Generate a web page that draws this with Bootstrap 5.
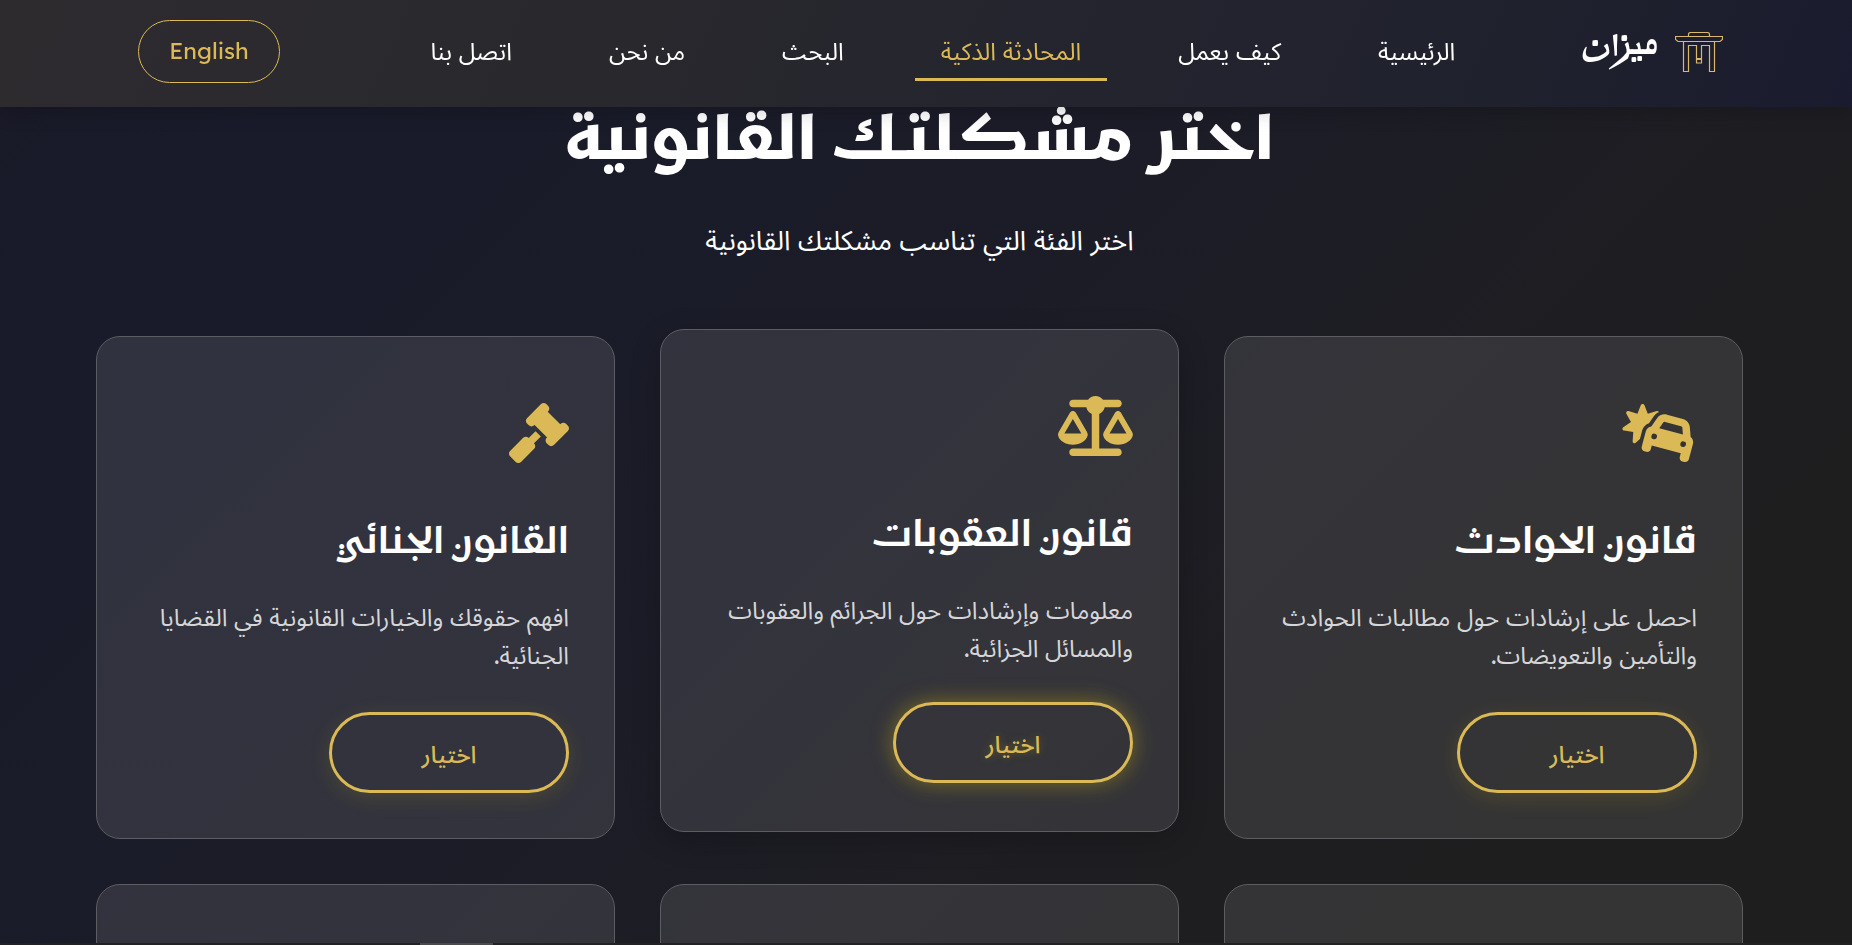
<!DOCTYPE html>
<html lang="ar" dir="rtl">
<head>
<meta charset="utf-8">
<meta name="viewport" content="width=device-width, initial-scale=1">
<title>ميزان</title>
<link href="https://cdn.jsdelivr.net/npm/bootstrap@5.3.0/dist/css/bootstrap.min.css" rel="stylesheet">
<style>
  :root { --gold: #dbb956; }
  body {
    font-family: Lexend, "Noto Sans Arabic", "DejaVu Sans", sans-serif;
    color: #fff;
    background: linear-gradient(135deg, #1a1a27 0%, #191b2b 15%, #1b1c27 45%, #1e1e22 68%, #1e1e1e 88%);
  }
  .site-nav {
    height: 107px;
    padding: 0 129px 4px 138px;
    background: linear-gradient(115deg, #2e2b2f 0%, #29292d 30%, #23242e 60%, #1f212d 82%, #1a1b2e 100%);
    box-shadow: 0 4px 20px rgba(0, 0, 0, .2);
  }
  .brand-name { font-family: Ruwudu, "Scheherazade New", "DejaVu Sans", serif; font-size: 34px; line-height: 60px; font-weight: 700; color: #fff; }
  .menu { gap: 45px; margin-left: 24px; font-size: 24px; }
  .menu a { color: #fff; padding: 0 26px; height: 59px; line-height: 58px; border-bottom: 3px solid transparent; text-decoration: none; white-space: nowrap; }
  .menu a.active { color: var(--gold); border-color: var(--gold); }
  .lang { width: 142px; height: 63px; border: 1px solid var(--gold); color: var(--gold); font-size: 23px; }
  .lang:hover { border-color: var(--gold); color: var(--gold); }
  .picker { padding: 0 109px 0 96px; }
  .picker h1, .topic h2 { font-family: Kufam, "DejaVu Sans", sans-serif; }
  .picker h1 { font-size: 60px; font-weight: 700; line-height: 90px; padding-top: 99px; }
  .picker .intro { font-size: 27px; line-height: 40px; margin: 31px 0 76px; }
  .topics { display: grid; grid-template-columns: repeat(3, 1fr); gap: 45px; }
  .topic { min-height: 503px; padding: 66px 45px 0; border: 1px solid #5c5c62; border-radius: 24px; background: rgba(255, 255, 255, .1); }
  .topic.raised { transform: translateY(-7px); box-shadow: 0 8px 30px rgba(0, 0, 0, .2); }
  .topic svg { height: 60px; fill: var(--gold); }
  .topic h2 { font-size: 36px; font-weight: 600; line-height: 60px; margin: 51px 0 24px; }
  .topic p { font-size: 24px; line-height: 38px; color: #d6d6d8; margin-bottom: 38px; }
  .choose, .choose:hover { width: 240px; height: 81px; padding-top: 8px; border: 3px solid var(--gold); color: var(--gold); font-size: 24px; font-weight: 500; box-shadow: 0 5px 22px rgba(255, 215, 0, .12); }
  .raised .choose { transform: translateY(-3px); box-shadow: 0 0 22px rgba(255, 215, 0, .35); text-shadow: 0 0 10px rgba(255, 215, 0, .3); }
  .bottom-edge { height: 2px; background: #222; padding-left: 420px; }
  .bottom-edge div { width: 73px; height: 2px; background: #4a4a4a; }
</style>
</head>
<body class="vh-100 overflow-hidden">
<header class="site-nav fixed-top d-flex align-items-center justify-content-between">
  <a href="#" class="d-flex align-items-center gap-3 text-decoration-none">
    <svg width="48" height="40" viewBox="0 0 48 40" fill="none" stroke="#d9b869" stroke-width="1.200"><path d="M13.500 4V2.500Q13.500 .500 16 .500H32Q34.500 .500 34.500 2.500V4M.500 4.500H47.500V7.500L45 9.500H3L.500 7.500ZM8.500 9.500V39.500H13.500V13.500H21.500V26.500H26.500V13.500H34.500V39.500H39.500V9.500M21.500 27.500H26.500V31H21.500Z"/></svg>
    <span class="brand-name">ميزان</span>
  </a>
  <nav class="menu d-flex">
    <a href="#">الرئيسية</a>
    <a href="#">كيف يعمل</a>
    <a href="#" class="active">المحادثة الذكية</a>
    <a href="#">البحث</a>
    <a href="#">من نحن</a>
    <a href="#">اتصل بنا</a>
  </nav>
  <button type="button" class="lang btn rounded-pill">English</button>
</header>
<main class="picker">
  <h1 class="text-center mb-0">اختر مشكلتك القانونية</h1>
  <p class="intro text-center">اختر الفئة التي تناسب مشكلتك القانونية</p>
  <section class="topics">
    <article class="topic">
      <svg viewBox="0 0 640 512" aria-hidden="true"><path d="M176 8c-6.600 0-12.400 4-14.900 10.100l-29.400 74L55.600 68.900c-6.300-1.900-13.100 .2-17.200 5.300s-4.600 12.200-1.400 17.900l39.500 69.100L10.900 206.400c-5.400 3.700-8 10.300-6.500 16.700s6.700 11.200 13.100 12.200l78.700 12.200L90.600 327c-.5 6.500 3.100 12.700 9 15.500s12.900 1.800 17.800-2.600l35.300-32.500 9.500-35.400 10.400-38.600c8-29.900 30.500-52.100 57.900-60.900l41-59.200c11.300-16.300 26.400-28.900 43.500-37.200c-.4-.6-.8-1.200-1.300-1.800c-4.100-5.100-10.900-7.200-17.200-5.300L220.300 92.100l-29.400-74C188.400 12 182.600 8 176 8zM367.700 161.500l135.600 36.300c6.500 1.800 11.300 7.400 11.800 14.200l4.600 56.500-201.500-54 32.200-46.600c3.800-5.600 10.800-8.100 17.300-6.400zm-69.900-30l-47.900 69.300c-21.600 3-40.300 18.600-46.300 41l-10.400 38.600-16.600 61.800-8.300 30.900c-4.600 17.100 5.600 34.600 22.600 39.200l15.500 4.100c17.100 4.600 34.600-5.600 39.200-22.600l8.300-30.900 247.300 66.300-8.300 30.900c-4.600 17.100 5.600 34.600 22.600 39.200l15.500 4.100c17.100 4.600 34.600-5.600 39.200-22.600l8.300-30.900L595 388l10.400-38.600c6-22.400-2.500-45.200-19.600-58.700l-6.800-84c-2.700-33.700-26.400-62-59-70.800L384.200 99.700c-32.700-8.800-67.300 4-86.500 31.800zm-17 131a24 24 0 1 1 -12.400 46.400 24 24 0 1 1 12.400-46.400zm217.900 83.200A24 24 0 1 1 545 358.100a24 24 0 1 1 -46.400-12.400z"/></svg>
      <h2>قانون الحوادث</h2>
      <p>احصل على إرشادات حول مطالبات الحوادث والتأمين والتعويضات.</p>
      <button type="button" class="choose btn rounded-pill">اختيار</button>
    </article>
    <article class="topic raised">
      <svg viewBox="0 0 640 512" aria-hidden="true"><path d="M384 32H512c17.700 0 32 14.300 32 32s-14.300 32-32 32H398.400c-5.200 25.800-22.900 47.100-46.400 57.300V448H512c17.700 0 32 14.300 32 32s-14.300 32-32 32H128c-17.700 0-32-14.300-32-32s14.300-32 32-32H288V153.300c-23.500-10.300-41.200-31.600-46.400-57.300H128c-17.700 0-32-14.300-32-32s14.300-32 32-32H256c14.600-19.400 37.800-32 64-32s49.400 12.600 64 32zm55.600 288H584.400L512 195.800 439.600 320zM512 416c-62.900 0-115.200-34-126-78.900c-2.600-11 1-22.300 6.700-32.100l95.200-163.200c5-8.600 14.200-13.800 24.100-13.800s19.100 5.300 24.100 13.800l95.200 163.200c5.700 9.800 9.300 21.100 6.700 32.100C627.200 382 574.900 416 512 416zM126.800 195.800L54.400 320H199.300L126.800 195.800zM.9 337.100c-2.600-11 1-22.300 6.700-32.100l95.200-163.200c5-8.600 14.200-13.800 24.100-13.800s19.100 5.300 24.100 13.800l95.200 163.200c5.700 9.800 9.300 21.100 6.700 32.100C242 382 189.700 416 126.800 416S11.700 382 .9 337.100z"/></svg>
      <h2>قانون العقوبات</h2>
      <p>معلومات وإرشادات حول الجرائم والعقوبات والمسائل الجزائية.</p>
      <button type="button" class="choose btn rounded-pill">اختيار</button>
    </article>
    <article class="topic">
      <svg viewBox="0 0 512 512" aria-hidden="true"><path d="M318.600 9.400c-12.500-12.500-32.800-12.500-45.300 0l-120 120c-12.500 12.500-12.500 32.800 0 45.300l16 16c12.500 12.500 32.800 12.500 45.300 0l4-4L325.400 293.400l-4 4c-12.500 12.500-12.500 32.800 0 45.300l16 16c12.500 12.500 32.800 12.500 45.300 0l120-120c12.500-12.500 12.500-32.800 0-45.300l-16-16c-12.500-12.500-32.800-12.500-45.300 0l-4 4L330.600 74.600l4-4c12.500-12.500 12.500-32.800 0-45.300l-16-16zm-152 288c-12.500-12.500-32.800-12.500-45.300 0l-112 112c-12.500 12.500-12.500 32.800 0 45.300l48 48c12.500 12.500 32.800 12.500 45.300 0l112-112c12.500-12.500 12.500-32.800 0-45.300l-1.400-1.400L272 285.300 226.700 240 168 298.700l-1.400-1.400z"/></svg>
      <h2>القانون الجنائي</h2>
      <p>افهم حقوقك والخيارات القانونية في القضايا الجنائية.</p>
      <button type="button" class="choose btn rounded-pill">اختيار</button>
    </article>
    <article class="topic"></article>
    <article class="topic"></article>
    <article class="topic"></article>
  </section>
</main>
<div class="bottom-edge fixed-bottom" dir="ltr"><div></div></div>
<script src="https://cdn.jsdelivr.net/npm/bootstrap@5.3.0/dist/js/bootstrap.bundle.min.js"></script>
</body>
</html>
